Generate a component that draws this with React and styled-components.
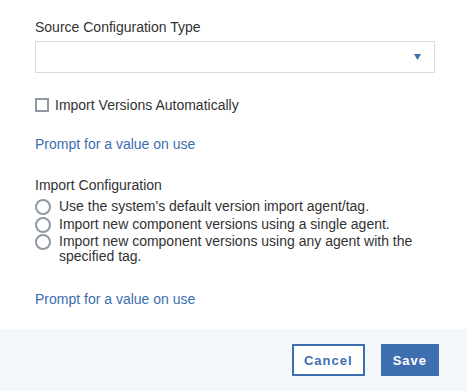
import React from "react";
import styled, { createGlobalStyle } from "styled-components";

const Global = createGlobalStyle`
  html, body { margin: 0; padding: 0; background: #ffffff; }
  body { font-family: "Liberation Sans", Arial, sans-serif; color: #323232; }
`;

const Dialog = styled.div`
  width: 467px;
  height: 391px;
  display: flex;
  flex-direction: column;
  background: #ffffff;
`;

const Body = styled.div`
  flex: 1;
  padding: 19px 32px 0 35px;
  display: flex;
  flex-direction: column;
`;

const Label = styled.div`
  font-size: 14px;
  line-height: 16px;
  color: #323232;
`;

const Select = styled.div`
  margin-top: 6px;
  width: 400px;
  height: 32px;
  box-sizing: border-box;
  border: 1px solid #dcdcdc;
  display: flex;
  align-items: center;
  justify-content: flex-end;
  padding-right: 13px;
`;

const CheckRow = styled.label`
  margin-top: 24px;
  display: flex;
  align-items: center;
  gap: 6px;
  font-size: 14px;
  line-height: 16px;
`;

const Checkbox = styled.span`
  width: 14px;
  height: 14px;
  box-sizing: border-box;
  border: 2px solid #8e99a5;
  display: inline-block;
`;

const Link = styled.a`
  display: block;
  margin-top: ${(p) => p.$mt}px;
  font-size: 14px;
  line-height: 16px;
  color: #3b6eaf;
  text-decoration: none;
`;

const Section = styled.div`
  margin-top: 25px;
`;

const RadioList = styled.div`
  margin-top: 6px;
  display: flex;
  flex-direction: column;
  gap: 1.5px;
`;

const RadioRow = styled.label`
  display: flex;
  align-items: flex-start;
  gap: 8px;
  font-size: 14px;
  line-height: 15px;
  padding-right: 8px;
`;

const Radio = styled.span`
  flex: none;
  width: 16px;
  height: 16px;
  box-sizing: border-box;
  border: 2px solid #8e99a5;
  border-radius: 50%;
`;

const Footer = styled.div`
  height: 62px;
  background: #f4f7fb;
  display: flex;
  align-items: center;
  justify-content: flex-end;
  gap: 16px;
  padding-right: 28px;
`;

const Button = styled.button`
  height: 32px;
  box-sizing: border-box;
  padding: 0 10px;
  font-family: "Liberation Sans", Arial, sans-serif;
  font-weight: bold;
  font-size: 13px;
  letter-spacing: 1px;
  border: 2px solid #3d6eb0;
  background: ${(p) => (p.$primary ? "#3d6eb0" : "#ffffff")};
  color: ${(p) => (p.$primary ? "#ffffff" : "#3d6eb0")};
  cursor: pointer;
`;

export default function App() {
  return (
    <>
      <Global />
      <Dialog>
        <Body>
          <Label>Source Configuration Type</Label>
          <Select>
            <svg width="7" height="6" viewBox="0 0 7 6">
              <polygon points="0,0 7,0 3.5,6" fill="#3d6eb0" />
            </svg>
          </Select>
          <CheckRow>
            <Checkbox />
            Import Versions Automatically
          </CheckRow>
          <Link $mt={23}>Prompt for a value on use</Link>
          <Section>
            <Label>Import Configuration</Label>
            <RadioList>
              <RadioRow>
                <Radio />
                <span>Use the system's default version import agent/tag.</span>
              </RadioRow>
              <RadioRow>
                <Radio />
                <span>Import new component versions using a single agent.</span>
              </RadioRow>
              <RadioRow>
                <Radio />
                <span>Import new component versions using any agent with the specified tag.</span>
              </RadioRow>
            </RadioList>
          </Section>
          <Link $mt={27}>Prompt for a value on use</Link>
        </Body>
        <Footer>
          <Button>Cancel</Button>
          <Button $primary>Save</Button>
        </Footer>
      </Dialog>
    </>
  );
}
